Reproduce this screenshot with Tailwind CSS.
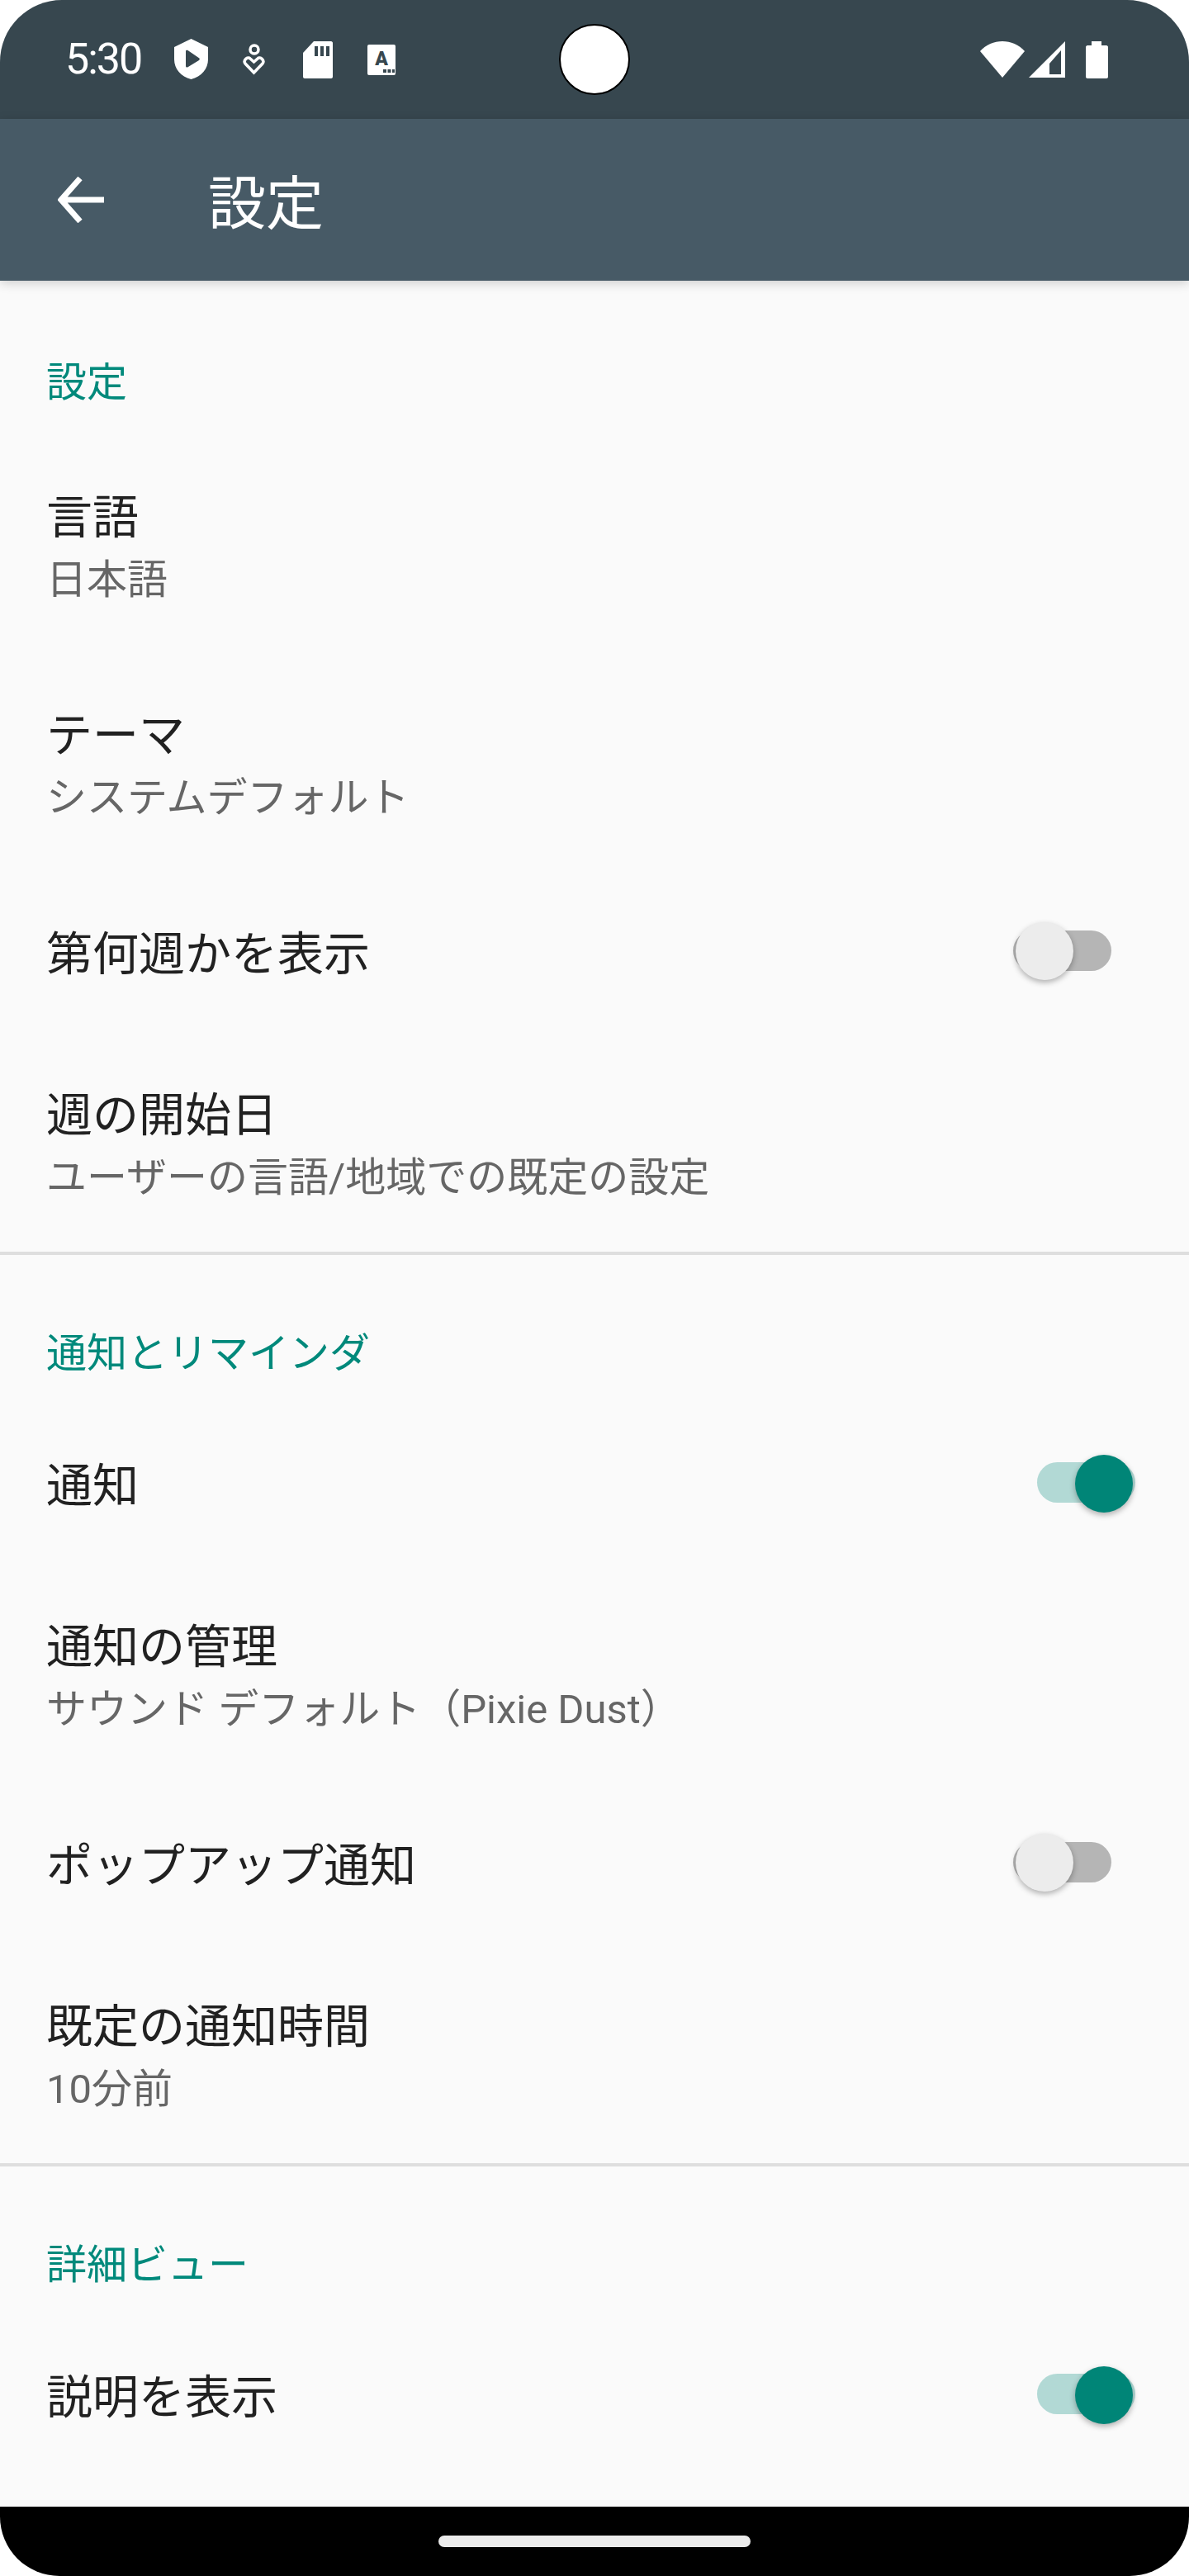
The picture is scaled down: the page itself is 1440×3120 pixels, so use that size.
<!doctype html>
<html lang="ja" class="bg-white">
<head>
    <meta charset="UTF-8">
    <meta name="viewport" content="width=device-width, initial-scale=1.0">
    <title>設定</title>
    <script src="https://cdn.jsdelivr.net/npm/@tailwindcss/browser@4"></script>
</head>
<body class="bg-white">

<div class="relative w-[1440px] h-[3120px] flex flex-col overflow-hidden rounded-t-[75px] rounded-b-[72px] bg-[#fafafa] font-[family-name:Roboto,'Noto_Sans_CJK_JP',sans-serif]">

    <!-- Status bar -->
    <div class="relative h-[144px] shrink-0 bg-[#37474f] flex items-center text-white">
        <span class="ml-[79px] w-[95px] text-[52px] leading-none tracking-[-2px]">5:30</span>
        <svg class="ml-[37px] w-[41px] h-[49px] -mt-[1px]" viewBox="0 0 41 49" fill="#fff">
            <path fill-rule="evenodd" d="M20.500 0 41 10v15c0 11-8 21-20.500 24C8 46 0 36 0 25V10ZM14 15v18c0 1.500 1.500 2 2.500 1.300L30 26c1-.7 1-2 0-2.700L16.500 14c-1-.7-2.500-.3-2.500 1Z"/>
        </svg>
        <svg class="ml-[42px] w-[27px] h-[38px]" viewBox="0 0 27 38" fill="none" stroke="#fff" stroke-width="3.500">
            <circle cx="14" cy="7" r="5"/>
            <path d="M13.500 35 3 24c-3-4 3-9 6-6l4.500 4 4.500-4c3-3 9 2 6 6Z"/>
        </svg>
        <svg class="ml-[46px] w-[36px] h-[45px]" viewBox="0 0 36 45">
            <path fill="#fff" d="M13 0h21c1 0 2 1 2 2v41c0 1-1 2-2 2H2c-1 0-2-1-2-2V14Z"/>
            <path fill="#37474f" d="M14 6h4v12h-4ZM21 6h4v12h-4ZM28 6h4v12h-4Z"/>
        </svg>
        <svg class="ml-[42px] w-[34px] h-[37px]" viewBox="0 0 34 37">
            <rect width="34" height="37" rx="2" fill="#fff"/>
            <text x="17" y="25" text-anchor="middle" font-family="Roboto" font-weight="900" font-size="23" fill="#37474f">A</text>
            <path fill="#37474f" d="M19 30h4v4h-4ZM24.500 30h4v4h-4ZM30 30h3v4h-3Z"/>
        </svg>

        <svg class="ml-auto w-[54px] h-[44px]" viewBox="0 0 54 44" fill="#fff">
            <path d="M0 12C7 4 17 0 27 0s20 4 27 12L27 44Z"/>
        </svg>
        <svg class="ml-[5px] w-[44px] h-[44px]" viewBox="0 0 44 44">
            <path fill="#fff" fill-rule="evenodd" d="M44 0v44H0ZM39 11 25 27v13h14Z"/>
        </svg>
        <svg class="ml-[25px] mr-[98px] w-[27px] h-[45px]" viewBox="0 0 27 45" fill="#fff">
            <path d="M7 0h12v5h6c1 0 2 1 2 2v36c0 1-1 2-2 2H2c-1 0-2-1-2-2V7c0-1 1-2 2-2h5Z"/>
        </svg>

        <!-- Camera cutout -->
        <div class="absolute left-[677px] top-[29px] w-[86px] h-[86px] rounded-full bg-white border-2 border-black"></div>
    </div>

    <!-- Toolbar -->
    <header class="relative z-10 h-[196px] shrink-0 bg-[#475a66] flex items-center text-white shadow-[0_3px_12px_rgba(0,0,0,0.18)]">
        <svg class="ml-[70px] w-[56px] h-[56px]" viewBox="0 0 56 56" fill="none" stroke="#fff" stroke-width="7">
            <path d="M56 28H4M27 2 4 28l23 26"/>
        </svg>
        <h1 class="ml-[126px] mt-[11px] text-[70px] leading-none font-normal">設定</h1>
    </header>

    <!-- Settings list -->
    <main class="flex-1 overflow-hidden">
        <section class="border-b-4 border-[#dedede]">
            <h2 class="h-[188px] pt-[92px] pl-[56px] text-[49px] leading-[64px] text-[#00897b]">設定</h2>

            <div class="h-[264px] pl-[56px] pt-[64px]">
                <p class="text-[56px] leading-[70px] text-[#212121]">言語</p>
                <p class="text-[49px] leading-[82px] text-[#666666]">日本語</p>
            </div>
            <div class="h-[264px] pl-[56px] pt-[64px]">
                <p class="text-[56px] leading-[70px] text-[#212121]">テーマ</p>
                <p class="text-[49px] leading-[82px] text-[#666666]">システムデフォルト</p>
            </div>
            <div class="h-[196px] pl-[56px] pt-[4px] flex items-center">
                <p class="text-[56px] leading-[70px] text-[#212121]">第何週かを表示</p>
                <div class="relative ml-auto mr-[94px] mb-[9px] w-[119px] h-[49px] rounded-full bg-[#b5b5b5]">
                    <div class="absolute left-[3px] -top-[10px] w-[70px] h-[70px] rounded-full bg-[#ececec] shadow-[0_3px_7px_rgba(0,0,0,0.3)]"></div>
                </div>
            </div>
            <div class="h-[264px] pl-[56px] pt-[64px]">
                <p class="text-[56px] leading-[70px] text-[#212121]">週の開始日</p>
                <p class="text-[49px] leading-[82px] text-[#666666]">ユーザーの言語/地域での既定の設定</p>
            </div>
        </section>

        <section class="border-b-4 border-[#dedede]">
            <h2 class="h-[180px] pt-[88px] pl-[56px] text-[49px] leading-[64px] text-[#00897b]">通知とリマインダ</h2>

            <div class="h-[196px] pl-[56px] pt-[4px] flex items-center">
                <p class="text-[56px] leading-[70px] text-[#212121]">通知</p>
                <div class="relative ml-auto mr-[65px] mb-[9px] w-[119px] h-[49px] rounded-full bg-[#b2d9d5]">
                    <div class="absolute right-[3px] -top-[9px] w-[70px] h-[70px] rounded-full bg-[#008577] shadow-[0_3px_7px_rgba(0,0,0,0.3)]"></div>
                </div>
            </div>
            <div class="h-[264px] pl-[56px] pt-[64px]">
                <p class="text-[56px] leading-[70px] text-[#212121]">通知の管理</p>
                <p class="text-[49px] leading-[82px] text-[#666666]">サウンド デフォルト（Pixie Dust）</p>
            </div>
            <div class="h-[196px] pl-[56px] pt-[4px] flex items-center">
                <p class="text-[56px] leading-[70px] text-[#212121]">ポップアップ通知</p>
                <div class="relative ml-auto mr-[94px] mb-[9px] w-[119px] h-[49px] rounded-full bg-[#b5b5b5]">
                    <div class="absolute left-[3px] -top-[10px] w-[70px] h-[70px] rounded-full bg-[#ececec] shadow-[0_3px_7px_rgba(0,0,0,0.3)]"></div>
                </div>
            </div>
            <div class="h-[264px] pl-[56px] pt-[64px]">
                <p class="text-[56px] leading-[70px] text-[#212121]">既定の通知時間</p>
                <p class="text-[49px] leading-[82px] text-[#666666]">10分前</p>
            </div>
        </section>

        <section>
            <h2 class="h-[180px] pt-[88px] pl-[56px] text-[49px] leading-[64px] text-[#00897b]">詳細ビュー</h2>
            <div class="h-[196px] pl-[56px] pt-[4px] flex items-center">
                <p class="text-[56px] leading-[70px] text-[#212121]">説明を表示</p>
                <div class="relative ml-auto mr-[65px] mb-[9px] w-[119px] h-[49px] rounded-full bg-[#b2d9d5]">
                    <div class="absolute right-[3px] -top-[9px] w-[70px] h-[70px] rounded-full bg-[#008577] shadow-[0_3px_7px_rgba(0,0,0,0.3)]"></div>
                </div>
            </div>
        </section>
    </main>

    <!-- Navigation bar -->
    <div class="h-[84px] shrink-0 bg-black flex items-center justify-center">
        <div class="w-[378px] h-[14px] rounded-full bg-[#ebebeb]"></div>
    </div>
</div>

</body>
</html>
